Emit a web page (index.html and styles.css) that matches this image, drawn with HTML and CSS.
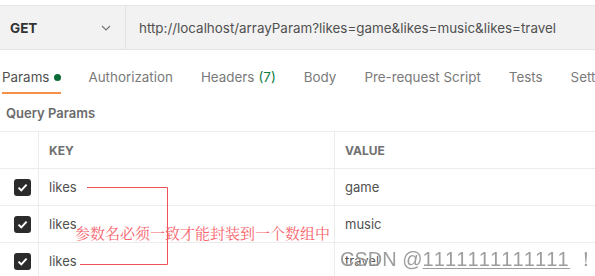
FILE: index.html
```html
<!DOCTYPE html>
<html>
<head>
<meta charset="utf-8">
<link rel="stylesheet" href="styles.css">
</head>
<body>
<div class="page">
  <div class="urlbar">
    <div class="method">
      <span class="method-name">GET</span>
      <svg class="chev" width="10" height="6" viewBox="0 0 10 6"><path d="M1 1l4 4 4-4" fill="none" stroke="#777" stroke-width="1.2"/></svg>
    </div>
    <div class="url">http://localhost/arrayParam?likes=game&amp;likes=music&amp;likes=travel</div>
  </div>

  <div class="tabs">
    <div class="tab active">Params <span class="dot"></span></div>
    <div class="tab">Authorization</div>
    <div class="tab">Headers <span class="count">(7)</span></div>
    <div class="tab">Body</div>
    <div class="tab">Pre-request Script</div>
    <div class="tab">Tests</div>
    <div class="tab">Settings</div>
  </div>

  <div class="section-title">Query Params</div>

  <div class="table">
    <div class="cell chk"></div>
    <div class="cell head">KEY</div>
    <div class="cell head">VALUE</div>

    <div class="cell chk"><span class="box"><svg width="11" height="9" viewBox="0 0 11 9"><path d="M1.5 4.6l2.8 2.8L9.6 1.6" fill="none" stroke="#fff" stroke-width="2"/></svg></span></div>
    <div class="cell">likes</div>
    <div class="cell">game</div>

    <div class="cell chk"><span class="box"><svg width="11" height="9" viewBox="0 0 11 9"><path d="M1.5 4.6l2.8 2.8L9.6 1.6" fill="none" stroke="#fff" stroke-width="2"/></svg></span></div>
    <div class="cell">likes</div>
    <div class="cell">music</div>

    <div class="cell chk"><span class="box"><svg width="11" height="9" viewBox="0 0 11 9"><path d="M1.5 4.6l2.8 2.8L9.6 1.6" fill="none" stroke="#fff" stroke-width="2"/></svg></span></div>
    <div class="cell">likes</div>
    <div class="cell">travel</div>
  </div>

  <svg class="bracket" width="595" height="276" viewBox="0 0 595 276"><path d="M87 187.5H167.5V264.5H80" fill="none" stroke="#f0505a" stroke-width="1"/></svg>
  <div class="note">参数名必须一致才能封装到一个数组中</div>
  <div class="watermark">CSDN @<span class="digits">1111111111111</span> ！</div>
</div>
</body>
</html>
```

FILE: styles.css
```css
html, body {
  margin: 0;
  padding: 0;
  background: #fff;
  overflow: hidden;
}
.page {
  position: relative;
  width: 595px;
  height: 276px;
  overflow: hidden;
  font-family: Inter, "Noto Sans", sans-serif;
  color: #505050;
}
.urlbar {
  margin-top: 5px;
  height: 43px;
  display: flex;
  background: #f2f2f2;
  border-top: 1px solid #e4e4e4;
  border-bottom: 1px solid #e4e4e4;
}
.method {
  width: 126px;
  flex: none;
  display: flex;
  align-items: center;
  justify-content: space-between;
  padding: 0 14px 0 10px;
  box-sizing: border-box;
  border-right: 1px solid #e2e2e2;
}
.method-name {
  font-weight: 700;
  font-size: 13.5px;
  color: #333;
}
.url {
  display: flex;
  align-items: center;
  padding-left: 13px;
  font-size: 13.4px;
  color: #505050;
  white-space: nowrap;
}
.tabs {
  display: flex;
  white-space: nowrap;
}
.tab {
  flex: none;
  font-size: 13.4px;
  line-height: 16px;
  padding: 19px 0 7px;
  border-bottom: 2px solid transparent;
  color: #7a7a7a;
  margin-right: 28px;
  display: flex;
  align-items: center;
}
.tab.active {
  margin-left: 2px;
  margin-right: 27px;
  color: #505050;
  border-bottom-color: #f4904a;
}
.dot {
  display: inline-block;
  width: 7px;
  height: 7px;
  border-radius: 50%;
  background: #0b6b36;
  margin-left: 5px;
}
.count {
  color: #0a7c3e;
  margin-left: 4px;
}
.section-title {
  margin-top: 11px;
  padding-left: 6px;
  font-size: 13px;
  font-weight: 600;
  line-height: 16px;
  color: #6b6b6b;
}
.table {
  margin-top: 10px;
  display: grid;
  grid-template-columns: 38px 296px 1fr;
  grid-auto-rows: 37px;
  border-top: 1px solid #ececec;
}
.cell {
  display: flex;
  align-items: center;
  padding-left: 10px;
  font-size: 13px;
  color: #505050;
  border-bottom: 1px solid #ececec;
  border-left: 1px solid #ececec;
  box-sizing: border-box;
}
.cell.chk {
  border-left: none;
  padding-left: 14px;
}
.cell.head {
  font-weight: 700;
  font-size: 12px;
  color: #707070;
}
.box {
  width: 17px;
  height: 17px;
  border-radius: 3px;
  background: #2b2b2b;
  display: flex;
  align-items: center;
  justify-content: center;
}
.bracket {
  position: absolute;
  left: 0;
  top: 0;
  pointer-events: none;
}
.note {
  position: absolute;
  left: 75px;
  top: 223px;
  font-family: "Noto Serif CJK SC", "Noto Sans CJK SC", serif;
  font-size: 15px;
  line-height: 20px;
  color: #f6646c;
  white-space: nowrap;
}
.watermark {
  position: absolute;
  left: 340px;
  top: 247px;
  font-family: "Liberation Sans", Arial, sans-serif;
  font-size: 20px;
  line-height: 24px;
  color: #8c8c8c;
  white-space: nowrap;
  text-shadow: 0 0 1px #fff, 0 0 2px #fff;
  opacity: 0.85;
}
.digits {
  letter-spacing: 1.6px;
  text-decoration: underline;
  text-decoration-thickness: 1px;
  text-underline-offset: 2px;
}
```
